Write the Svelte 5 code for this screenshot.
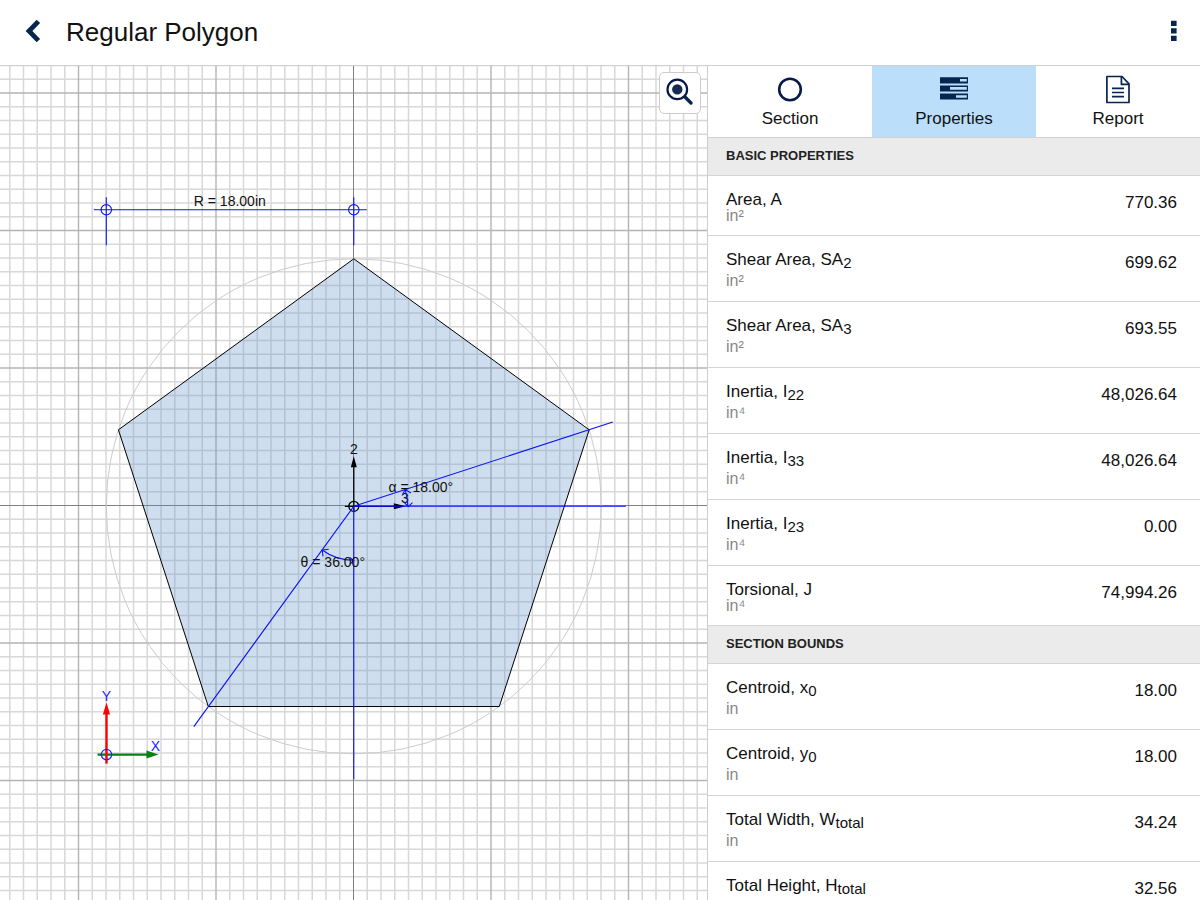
<script>
  let activeTab = $state('Properties');

  const tabs = ['Section', 'Properties', 'Report'];

  const groups = [
    {
      title: 'BASIC PROPERTIES',
      rows: [
        { name: 'Area, A', unit: 'in²', value: '770.36' },
        { name: 'Shear Area, SA', sub: '2', unit: 'in²', value: '699.62' },
        { name: 'Shear Area, SA', sub: '3', unit: 'in²', value: '693.55' },
        { name: 'Inertia, I', sub: '22', unit: 'in⁴', value: '48,026.64' },
        { name: 'Inertia, I', sub: '33', unit: 'in⁴', value: '48,026.64' },
        { name: 'Inertia, I', sub: '23', unit: 'in⁴', value: '0.00' },
        { name: 'Torsional, J', unit: 'in⁴', value: '74,994.26' }
      ]
    },
    {
      title: 'SECTION BOUNDS',
      rows: [
        { name: 'Centroid, x', sub: '0', unit: 'in', value: '18.00' },
        { name: 'Centroid, y', sub: '0', unit: 'in', value: '18.00' },
        { name: 'Total Width, W', sub: 'total', unit: 'in', value: '34.24' },
        { name: 'Total Height, H', sub: 'total', unit: 'in', value: '32.56' }
      ]
    }
  ];

  // drawing scale, pixels per inch
  const scale = 13.75;
  const radius = 18 * scale;
  const sides = 5;

  // grid lines on both sides of the origin, every tenth one is major
  const steps = Array.from({ length: 141 }, (_, i) => i - 70);
  const minor = steps.filter((i) => i % 10 !== 0);
  const major = steps.filter((i) => i % 10 === 0 && i !== 0);

  const points = Array.from({ length: sides }, (_, i) => {
    const a = (i * 2 * Math.PI) / sides;
    return `${radius * Math.sin(a)},${-radius * Math.cos(a)}`;
  }).join(' ');
</script>

<div class="app">
  <header>
    <button class="icon-btn" aria-label="Back">
      <svg width="20" height="26" viewBox="0 0 20 26">
        <path d="M16.4 3.4L7 13L16.4 22.6" fill="none" stroke="#06264f" stroke-width="4.8" />
      </svg>
    </button>
    <h1>Regular Polygon</h1>
    <button class="icon-btn" aria-label="Menu">
      <svg width="20" height="26" viewBox="0 0 20 26">
        <path fill="#06264f" d="M7 2.8h5.6v5.2H7zM7 10.3h5.6v5.2H7zM7 17.8h5.6v5.2H7z" />
      </svg>
    </button>
  </header>

  <main>
    <section class="canvas">
      <svg class="drawing" width="100%" height="100%">
        <svg x="50%" y="440" overflow="visible">
          <g class="minor">
            {#each minor as i}
              <line x1={i * scale} x2={i * scale} y1="-1000" y2="1000" />
              <line y1={i * scale - 0.5} y2={i * scale - 0.5} x1="-1000" x2="1000" />
            {/each}
          </g>
          <g class="major">
            {#each major as i}
              <line x1={i * scale} x2={i * scale} y1="-1000" y2="1000" />
              <line y1={i * scale - 0.5} y2={i * scale - 0.5} x1="-1000" x2="1000" />
            {/each}
          </g>
          <g class="axis">
            <line x1="0" x2="0" y1="-1000" y2="1000" />
            <line y1="-0.5" y2="-0.5" x1="-1000" x2="1000" />
          </g>

          <g transform="translate(0.3 0.3)">
            <circle r={radius} fill="none" stroke="#ccc" />
            <polygon {points} fill="#5f93c9" fill-opacity="0.3" stroke="#000" />

            <!-- local axes -->
            <g stroke="#000" fill="none" stroke-width="1.3">
              <path d="M0 6V-42M-9 0H42" />
              <circle r="5" />
            </g>
            <path d="M0 -50l3 11h-6zM52 0l-12 -3v6z" />
            <text x="0" y="-52">2</text>
            <text x="51" y="-3">3</text>

            <!-- radius dimension -->
            <g class="dim">
              <path d="M-260 -296.5H13M-247.5 -309V-261M0 -309V-261" />
              <circle cx="-247.5" cy="-296.5" r="5.2" />
              <circle cx="0" cy="-296.5" r="5.2" />
            </g>
            <text x="-124" y="-300">R = 18.00in</text>

            <!-- angles -->
            <g class="dim">
              <path d="M259 -84.2L0 0H272M0 0V273M0 0L-160 220.3" />
              <path d="M51.4 -16.7A54 54 0 0 1 54 0M49 -12l2.4 -4.7l5.8 3.4M50 -4.5l4.3 4.8l4.4 -4" />
              <path d="M-31.7 43.7A54 54 0 0 0 0 54M-25 43l-6.7 0.7l1 6.5M-4 51l4 3.4l-4 3.4" />
            </g>
            <text x="67" y="-14">α = 18.00°</text>
            <text x="-21" y="61">θ = 36.00°</text>

            <!-- global axes -->
            <g transform="translate(-247.3 248.3)">
              <path d="M-9 0H42" stroke="#0a7f12" stroke-width="2.4" />
              <path d="M52 0l-12 -4v8z" fill="#0a7f12" />
              <path d="M0 9V-42" stroke="#f00" stroke-width="2.4" />
              <path d="M0 -52l3.6 12h-7.2z" fill="#f00" />
              <circle r="5.2" fill="none" stroke="#22f" stroke-width="1.2" />
              <text class="blue" x="0" y="-54">Y</text>
              <text class="blue" x="49" y="-4">X</text>
            </g>
          </g>
        </svg>
      </svg>
      <button class="zoom" aria-label="Zoom to fit">
        <svg width="32" height="32" viewBox="0 0 32 32">
          <path d="M20 19L27 26" stroke="#06264f" stroke-width="3.4" stroke-linecap="round" />
          <circle cx="13.3" cy="12.4" r="9.8" fill="#fff" stroke="#06184a" stroke-width="2.2" />
          <circle cx="13.3" cy="12.4" r="5.2" fill="#152c50" />
        </svg>
      </button>
    </section>

    <aside>
      <nav>
        {#each tabs as tab}
          <button class="tab" class:active={activeTab === tab} onclick={() => (activeTab = tab)}>
            <svg width="32" height="32" viewBox="0 0 32 32">
              {#if tab === 'Section'}
                <circle cx="16" cy="15.5" r="10.8" fill="none" stroke="#061b48" stroke-width="2.6" />
              {:else if tab === 'Properties'}
                <path fill="#06264f" d="M2 3.2h28v6.2H2zM2 11.4h28v6H2zM2 19.4h28v6.2H2z" />
                <path fill="#bbdefb" d="M22 5h6.8v2.6H22zM12 13.1h16.8v2.6H12zM18 21.2h10.8v2.6H18z" />
              {:else}
                <g fill="none" stroke="#06264f" stroke-width="1.7" stroke-linejoin="round">
                  <path d="M4.9 2.5H20L27 9.8V28.5H4.9Z" />
                  <path d="M19.4 2.6V10.4H27" />
                  <path d="M10 14.4H22M10 18.5H22M10 22.6H22" />
                </g>
              {/if}
            </svg>
            <span>{tab}</span>
          </button>
        {/each}
      </nav>

      <div class="list">
        <table>
          {#each groups as group}
            <tbody>
              <tr class="group">
                <th colspan="2" scope="rowgroup">{group.title}</th>
              </tr>
              {#each group.rows as row}
                <tr class="row" class:with-sub={row.sub}>
                  <th scope="row">
                    <div class="name">{row.name}{#if row.sub}<sub>{row.sub}</sub>{/if}</div>
                    <div class="unit">{row.unit}</div>
                  </th>
                  <td>{row.value}</td>
                </tr>
              {/each}
            </tbody>
          {/each}
        </table>
      </div>
    </aside>
  </main>
</div>

<style>
:global(body) {
  margin: 0;
  background: #fff;
}

.app {
  display: flex;
  flex-direction: column;
  height: 100vh;
  font-family: "Liberation Sans", Arial, sans-serif;
  color: #111;
}

button {
  padding: 0;
  border: none;
  background: none;
  font: inherit;
  color: inherit;
  cursor: pointer;
}

svg {
  display: block;
}

header {
  display: flex;
  align-items: center;
  padding: 0 16px 4px 22px;
  height: 61px;
  border-bottom: 1px solid #d0d0d0;
}

h1 {
  flex: 1;
  margin: 0 0 0 24px;
  padding-top: 2px;
  font-size: 26px;
  line-height: 30px;
  font-weight: normal;
}

main {
  display: flex;
  flex: 1;
  min-height: 0;
}

/* Drawing area */
.canvas {
  position: relative;
  flex: 1;
  min-width: 0;
  overflow: hidden;
}

.drawing {
  overflow: hidden;
}

.minor {
  stroke: #d8d8d8;
  stroke-width: 1.5;
}

.major {
  stroke: #b4b4b4;
  stroke-width: 1.4;
}

.axis {
  stroke: #808080;
}

.dim {
  fill: none;
  stroke: #0a14f5;
  stroke-width: 1.1;
}

.drawing text {
  font-size: 14px;
  text-anchor: middle;
  fill: #111;
}

.drawing text.blue {
  fill: #22f;
}

.zoom {
  position: absolute;
  top: 6px;
  right: 6px;
  padding: 4px;
  border: 1px solid #ccc;
  border-radius: 5px;
  background: #fff;
}

/* Side panel */
aside {
  display: flex;
  flex-direction: column;
  width: 41%;
  border-left: 1px solid #ccc;
}

nav {
  display: flex;
  border-bottom: 1px solid #d0d0d0;
}

.tab {
  flex: 1;
  display: flex;
  flex-direction: column;
  align-items: center;
  gap: 3px;
  padding: 8px 0;
  font-size: 17px;
  line-height: 20px;
}

.tab.active {
  background: #bbdefb;
}

.list {
  flex: 1;
  min-height: 0;
  overflow-y: auto;
  scrollbar-width: none;
}

table {
  width: 100%;
  border-spacing: 0;
}

th,
td {
  box-sizing: border-box;
  padding: 0 0 0 18px;
  border-bottom: 1px solid #d4d4d4;
  text-align: left;
  vertical-align: top;
  font-weight: normal;
}

.group th {
  height: 38px;
  padding-bottom: 2px;
  background: #ebebeb;
  color: #222;
  font-size: 13px;
  font-weight: bold;
  vertical-align: middle;
}

.row th {
  height: 60px;
  padding-top: 15px;
}

.row td {
  padding: 18px 23px 0 0;
  text-align: right;
  font-size: 17px;
  line-height: 17px;
}

.with-sub th {
  height: 66px;
}

.name {
  font-size: 17px;
  line-height: 17px;
}

.with-sub .name {
  padding-bottom: 5px;
}

sub {
  font-size: 15px;
  line-height: 0;
  vertical-align: -3px;
}

.unit {
  color: #888;
  font-size: 16px;
  line-height: 16px;
}
</style>
